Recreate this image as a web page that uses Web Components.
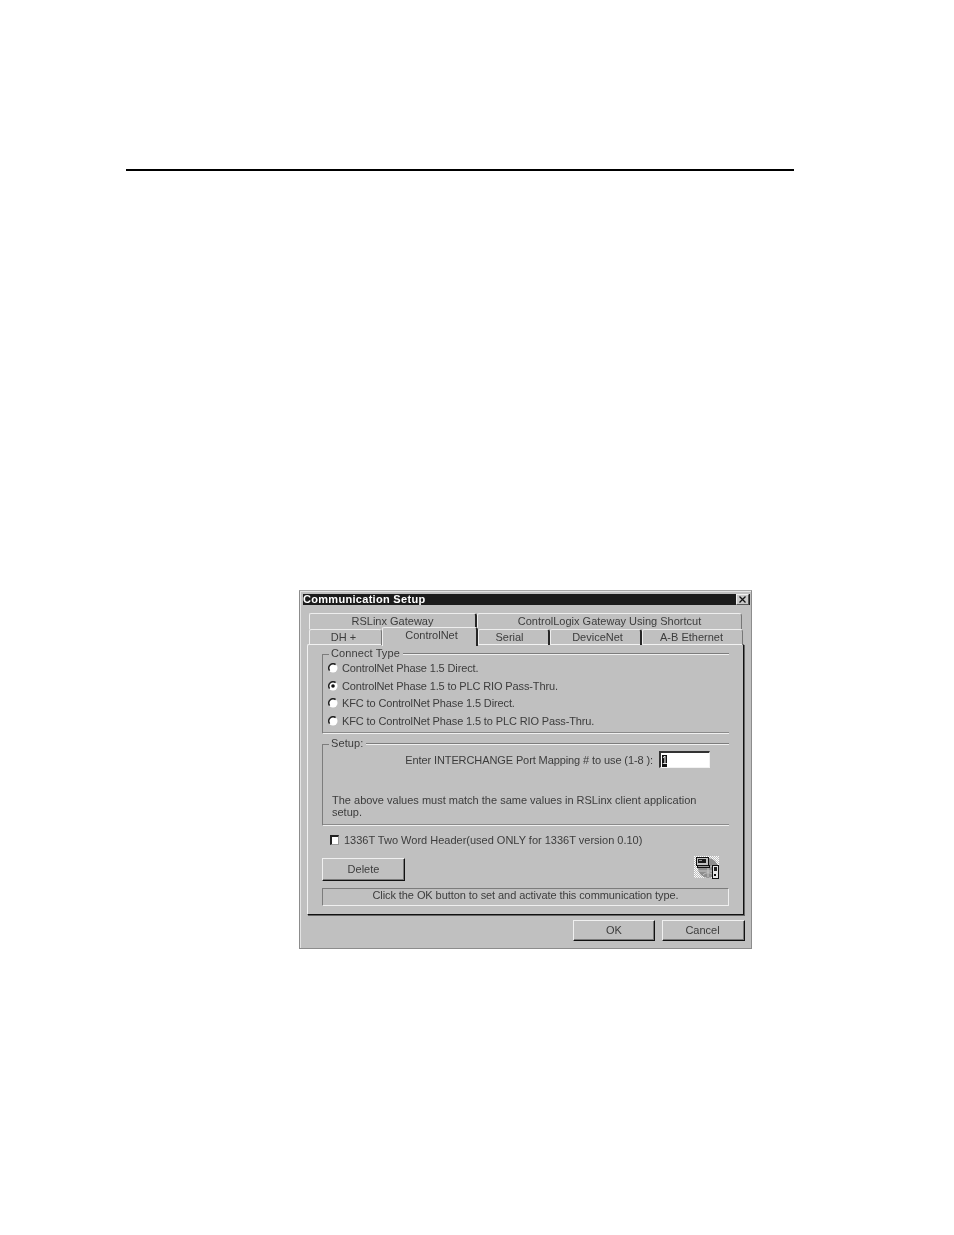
<!DOCTYPE html>
<html>
<head>
<meta charset="utf-8">
<title>Communication Setup</title>
<style>
  html, body { margin: 0; padding: 0; background: #fff; }
  body { width: 954px; height: 1235px; overflow: hidden; font-family: "Liberation Sans", Arial, sans-serif; }
</style>
</head>
<body>
<manual-page>
  <win-dialog heading="Communication Setup">
    <tab-strip slot="tabs"></tab-strip>

    <group-box label="Connect Type" style="--body-height:75px">
      <div style="display:grid;grid-auto-rows:17.7px;margin-top:-2px">
        <radio-option>ControlNet Phase 1.5 Direct.</radio-option>
        <radio-option checked>ControlNet Phase 1.5 to PLC RIO Pass-Thru.</radio-option>
        <radio-option>KFC to ControlNet Phase 1.5 Direct.</radio-option>
        <radio-option>KFC to ControlNet Phase 1.5 to PLC RIO Pass-Thru.</radio-option>
      </div>
    </group-box>

    <group-box label="Setup:" style="--body-height:75px;margin-top:3px">
      <port-setting></port-setting>
      <note-text>The above values must match the same values in RSLinx client application setup.</note-text>
    </group-box>

    <win-check style="margin-top:6px">1336T Two Word Header(used ONLY for 1336T version 0.10)</win-check>

    <delete-row></delete-row>

    <status-box>Click the OK button to set and activate this communication type.</status-box>

    <win-button slot="actions" style="--w:82px">OK</win-button>
    <win-button slot="actions" style="--w:83px;padding-right:2px">Cancel</win-button>
  </win-dialog>
</manual-page>

<script>
// shared text settings for the old windows look
const uiFont = `font-family:"Liberation Sans",Arial,sans-serif;font-size:11px;color:#3c3c3c;letter-spacing:0;`

class ManualPage extends HTMLElement {
  constructor() {
    super()
    this.attachShadow({ mode: 'open' }).innerHTML = `
      <style>
        :host { display: block; padding: 169px 0 0 0; }
        .rule { height: 2px; width: 668px; margin-left: 126px; background: #000; }
        .figure { margin: 419px 0 0 299px; }
      </style>
      <div class="rule"></div>
      <div class="figure"><slot></slot></div>`
  }
}

class WinDialog extends HTMLElement {
  constructor() {
    super()
    this.attachShadow({ mode: 'open' })
  }

  connectedCallback() {
    this.shadowRoot.innerHTML = `
      <style>
        :host { display: block; box-sizing: border-box; width: 453px; height: 359px; filter: blur(.4px);
                background: #c0c0c0; border: 1px solid #8c8c8c; border-top-color: #a8a8a8; ${uiFont} }
        .frame { box-sizing: border-box; height: 100%; padding: 2px 1px 0 2px; border: 1px solid #e4e4e4;
                 border-right: 0; border-bottom: 0; display: flex; flex-direction: column; }
        .title { flex: none; height: 11px; background: #1c1c1c; color: #fff; display: flex;
                 align-items: center; justify-content: space-between; font-weight: bold; font-size: 11px;
                 letter-spacing: .3px; position: relative; }
        .title span:first-child { position: relative; top: -1px; }
        .close { position: absolute; right: 1px; top: 0px; width: 13px; height: 11px; box-sizing: border-box;
                 background: #c8c8c8; border: 1px solid #eee; border-right-color: #555; border-bottom-color: #555; }
        .close svg { display: block; width: 11px; height: 9px; }
        .tabs { margin: 8px 0 0 6px; position: relative; z-index: 1; }
        .panel { box-sizing: border-box; width: 437px; height: 271px; margin: -1px 0 0 4px; padding: 2px 14px 0 14px;
                 border: 1px solid #f2f2f2; border-right-color: #111; border-bottom-color: #111;
                 box-shadow: 1px 1px 0 #666; border-radius: 2px 0 0 0; }
        .actions { display: flex; justify-content: flex-end; gap: 7px; margin: 5px 5px 0 0; }
      </style>
      <div class="frame">
        <div class="title">
          <span>${this.getAttribute('heading')}</span>
          <span class="close"><svg viewBox="0 0 11 9"><path d="M2.5 1.5l6 6M8.5 1.5l-6 6" stroke="#111" stroke-width="1.3" fill="none"/></svg></span>
        </div>
        <div class="tabs"><slot name="tabs"></slot></div>
        <div class="panel"><slot></slot></div>
        <div class="actions"><slot name="actions"></slot></div>
      </div>`
  }
}

class WinTab extends HTMLElement {
  constructor() {
    super()
    this.attachShadow({ mode: 'open' }).innerHTML = `
      <style>
        :host { display: flex; box-sizing: border-box; width: var(--w); height: 16px; align-items: center;
                justify-content: center; border-top: 1px solid #eee; border-left: 1px solid #eee;
                border-right: 2px solid #262626; border-radius: 2px 3px 0 0; padding-bottom: 2px; ${uiFont} }
        :host([plain]) { border-right: 1px solid #777; }
        :host([selected]) { height: 19px; margin-top: -2px; padding-bottom: 5px; background: #c0c0c0; position: relative; z-index: 2; }
      </style>
      <slot></slot>`
  }
}

class TabStrip extends HTMLElement {
  constructor() {
    super()
    this.attachShadow({ mode: 'open' }).innerHTML = `
      <style>
        :host { display: block; }
        .row { display: flex; height: 16px; }
      </style>
      <div class="row">
        <win-tab style="--w:168px">RSLinx Gateway</win-tab>
        <win-tab plain style="--w:265px">ControlLogix Gateway Using Shortcut</win-tab>
      </div>
      <div class="row">
        <win-tab plain style="--w:73px;padding-right:4px">DH +</win-tab>
        <win-tab selected style="--w:96px;padding-left:4px">ControlNet</win-tab>
        <win-tab style="--w:72px;padding-right:8px">Serial</win-tab>
        <win-tab style="--w:92px;padding-left:4px">DeviceNet</win-tab>
        <win-tab plain style="--w:101px;padding-right:2px">A-B Ethernet</win-tab>
      </div>`
  }
}

class GroupBox extends HTMLElement {
  constructor() {
    super()
    this.attachShadow({ mode: 'open' })
  }

  connectedCallback() {
    this.shadowRoot.innerHTML = `
      <style>
        :host { display: block; }
        .head { display: flex; height: 14px; align-items: center; }
        .stub { width: 7px; height: 7px; align-self: flex-end; box-sizing: border-box;
                border-top: 1px solid #7c7c7c; border-left: 1px solid #7c7c7c; }
        .label { padding: 0 3px 2px 2px; line-height: 12px; letter-spacing: .1px; }
        .line { flex: 1; height: 2px; border-top: 1px solid #7c7c7c; border-bottom: 1px solid #f0f0f0; box-sizing: border-box; }
        .body { box-sizing: border-box; height: var(--body-height); padding: 0 0 0 5px; border-left: 1px solid #7c7c7c;
                border-bottom: 1px solid #f0f0f0; box-shadow: inset 0 -1px 0 #8a8a8a; }
      </style>
      <div class="head"><span class="stub"></span><span class="label">${this.getAttribute('label')}</span><span class="line"></span></div>
      <div class="body"><slot></slot></div>`
  }
}

class RadioOption extends HTMLElement {
  constructor() {
    super()
    this.attachShadow({ mode: 'open' })
  }

  connectedCallback() {
    const dot = this.hasAttribute('checked') ? '<circle cx="5" cy="5" r="1.8" fill="#111"/>' : ''
    this.shadowRoot.innerHTML = `
      <style>
        :host { display: flex; align-items: center; gap: 4px; ${uiFont} letter-spacing: -.13px; }
        svg { flex: none; width: 10px; height: 10px; }
      </style>
      <svg viewBox="0 0 10 10">
        <circle cx="5" cy="5" r="4.5" fill="#fff"/>
        <path d="M1.6 7.6A4.3 4.3 0 0 1 7.6 1.6" fill="none" stroke="#222" stroke-width="1.5"/>
        ${dot}
      </svg>
      <span><slot></slot></span>`
  }
}

class WinCheck extends HTMLElement {
  constructor() {
    super()
    this.attachShadow({ mode: 'open' }).innerHTML = `
      <style>
        :host { display: flex; align-items: center; height: 16px; gap: 5px; padding-left: 8px; ${uiFont} }
        .box { flex: none; box-sizing: border-box; width: 9px; height: 10px; background: #fff;
               border-top: 2px solid #222; border-left: 2px solid #222; border-right: 1px solid #999; border-bottom: 1px solid #999; }
      </style>
      <span class="box"></span><span><slot></slot></span>`
  }
}

class WinButton extends HTMLElement {
  constructor() {
    super()
    this.attachShadow({ mode: 'open' }).innerHTML = `
      <style>
        :host { display: flex; box-sizing: border-box; width: var(--w); height: 21px; align-items: center; justify-content: center;
                padding-bottom: 1px; border: 1px solid #f0f0f0; border-right-color: #111; border-bottom-color: #111;
                box-shadow: inset -1px -1px 0 #7a7a7a; ${uiFont} }
      </style>
      <slot></slot>`
  }
}

class PortSetting extends HTMLElement {
  constructor() {
    super()
    this.attachShadow({ mode: 'open' }).innerHTML = `
      <style>
        :host { display: flex; justify-content: flex-end; align-items: center; height: 17px; margin: 0 19px 0 0; gap: 6px; ${uiFont} letter-spacing: -.1px; }
        .prompt { padding-top: 1px; }
        .field { box-sizing: border-box; width: 51px; height: 17px; background: #fff; padding: 1px 0 0 1px;
                 border: 1px solid #f2f2f2; border-top: 2px solid #333; border-left: 2px solid #333; display: flex; align-items: center; }
        .sel { background: #111; color: #fff; line-height: 12px; width: 5px; letter-spacing: 0; font-size: 10px; display: block; }
      </style>
      <span class="prompt">Enter INTERCHANGE Port Mapping # to use (1-8 ):</span>
      <span class="field"><span class="sel">1</span></span>`
  }
}

class NoteText extends HTMLElement {
  constructor() {
    super()
    this.attachShadow({ mode: 'open' }).innerHTML = `
      <style>
        :host { display: block; margin-top: 26px; width: 392px; line-height: 12px; padding-left: 4px; ${uiFont} }
      </style>
      <slot></slot>`
  }
}

class StatusBox extends HTMLElement {
  constructor() {
    super()
    this.attachShadow({ mode: 'open' }).innerHTML = `
      <style>
        :host { display: flex; box-sizing: border-box; height: 18px; margin-top: 7px; align-items: center; justify-content: center;
                padding-bottom: 5px; border: 1px solid #f0f0f0; border-top-color: #7c7c7c; border-left-color: #7c7c7c; ${uiFont} letter-spacing: -.08px; }
      </style>
      <slot></slot>`
  }
}

class NetIcon extends HTMLElement {
  constructor() {
    super()
    this.attachShadow({ mode: 'open' }).innerHTML = `
      <style>
        :host { display: block; width: 26px; height: 24px; }
        svg { display: block; width: 26px; height: 24px; }
      </style>
      <svg viewBox="0 0 26 24" shape-rendering="crispEdges">
        <defs>
          <pattern id="dither" width="2" height="2" patternUnits="userSpaceOnUse">
            <rect width="2" height="2" fill="#c0c0c0"/>
            <rect width="1" height="1" fill="#fff"/>
            <rect x="1" y="1" width="1" height="1" fill="#f4f4f4"/>
          </pattern>
        </defs>
        <rect x="0" y="0" width="25" height="22" fill="url(#dither)"/>
        <circle cx="14" cy="12" r="10" fill="#8e8e8e" shape-rendering="auto"/>
        <path d="M5 15h18M14 4v17M9 9c3 3 7 3 10 0M9 19c3-3 7-3 10 0" stroke="#c8c8c8" stroke-width="1" fill="none" shape-rendering="auto"/>
        <rect x="2" y="1" width="12" height="8" fill="#c0c0c0" stroke="#111"/>
        <rect x="4" y="3" width="8" height="4" fill="#1a1a1a"/>
        <rect x="5" y="4" width="3" height="1" fill="#999"/>
        <rect x="3" y="9" width="12" height="2" fill="#999" stroke="#111"/>
        <rect x="18" y="9" width="6" height="13" fill="#e8e8e8" stroke="#111"/>
        <rect x="20" y="11" width="3" height="4" fill="#222"/>
        <rect x="20" y="18" width="2" height="2" fill="#111"/>
      </svg>`
  }
}

class DeleteRow extends HTMLElement {
  constructor() {
    super()
    this.attachShadow({ mode: 'open' }).innerHTML = `
      <style>
        :host { display: flex; justify-content: space-between; align-items: flex-start; margin-top: 10px; padding-right: 9px; height: 23px; }
        net-icon { margin-top: -2px; }
        win-button { --w: 83px; height: 23px; }
      </style>
      <win-button>Delete</win-button>
      <net-icon></net-icon>`
  }
}

customElements.define('manual-page', ManualPage)
customElements.define('win-dialog', WinDialog)
customElements.define('win-tab', WinTab)
customElements.define('tab-strip', TabStrip)
customElements.define('group-box', GroupBox)
customElements.define('radio-option', RadioOption)
customElements.define('win-check', WinCheck)
customElements.define('win-button', WinButton)
customElements.define('port-setting', PortSetting)
customElements.define('note-text', NoteText)
customElements.define('status-box', StatusBox)
customElements.define('net-icon', NetIcon)
customElements.define('delete-row', DeleteRow)
</script>
</body>
</html>
